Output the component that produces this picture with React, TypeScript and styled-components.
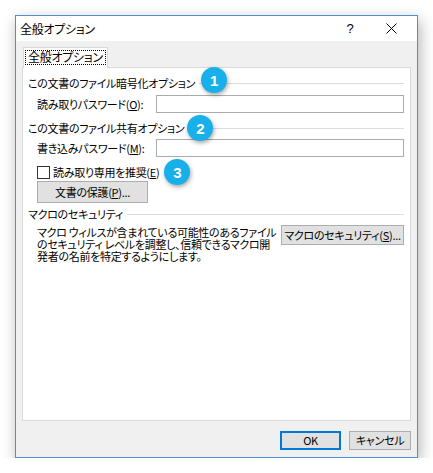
import styled, {createGlobalStyle} from 'styled-components';

const GlobalStyle = createGlobalStyle`
	html, body {
		margin: 0;
		background: #fff;
	}
	body {
		font-family: 'Noto Sans CJK JP', 'Noto Sans', sans-serif;
		font-size: 11px;
		letter-spacing: -0.3px;
		color: #000;
		font-feature-settings: 'palt' 1;
	}
`;

const Page = styled.div`
	padding: 15px 0 0 15px;
`;

const Window = styled.div`
	box-sizing: border-box;
	width: 403px;
	height: 443px;
	border: 1px solid #4a8fdb;
	background: #f0f0f0;
	display: flex;
	flex-direction: column;
	box-shadow: 2px 5px 14px rgba(0, 0, 0, 0.3);
`;

const TitleBar = styled.div`
	height: 25px;
	background: #fff;
	display: flex;
	align-items: center;
	padding-left: 4px;
	line-height: 1;
`;

const Title = styled.div`
	flex: 1;
	font-size: 12px;
`;

const TitleIcon = styled.div<{$width: number; $gap: number}>`
	width: ${(p) => p.$width}px;
	margin-right: ${(p) => p.$gap}px;
	display: flex;
	align-items: center;
	justify-content: center;
	font-family: 'Liberation Sans', Arial, sans-serif;
	font-size: 13px;
`;

const Body = styled.div`
	flex: 1;
	display: flex;
	flex-direction: column;
	padding: 6px 6px 7px 6px;
`;

const TabStrip = styled.div`
	display: flex;
`;

const Tab = styled.div`
	position: relative;
	z-index: 1;
	box-sizing: border-box;
	height: 21px;
	margin: 0 0 -1px 1px;
	padding: 3px 2px 0 2px;
	border: 1px solid #d9d9d9;
	border-bottom: 0;
	background: #fff;
	line-height: 1;
`;

const TabLabel = styled.span`
	display: inline-block;
	padding: 0 2px 1px;
	outline: 1px dotted #000;
	font-size: 12px;
`;

const Panel = styled.div`
	flex: 1;
	display: flex;
	flex-direction: column;
	border: 1px solid #d9d9d9;
	background: #fff;
	padding: 6px 6px 0 5px;
	white-space: nowrap;
`;

const SectionHeader = styled.div<{$top?: number}>`
	display: flex;
	align-items: center;
	height: 18px;
	margin-top: ${(p) => p.$top ?? 0}px;
`;

const Rule = styled.div`
	flex: 1;
	height: 1px;
	margin-left: 4px;
	background: #dcdcdc;
`;

const Anchor = styled.span`
	position: relative;
`;

const Badge = styled.span<{$gap: number; $dy: number}>`
	position: absolute;
	z-index: 2;
	left: calc(100% + ${(p) => p.$gap}px);
	top: 50%;
	width: 26px;
	height: 26px;
	margin-top: ${(p) => p.$dy - 13}px;
	border-radius: 50%;
	background: #17b0ea;
	color: #fff;
	display: flex;
	align-items: center;
	justify-content: center;
	font-family: 'Liberation Sans', Arial, sans-serif;
	font-weight: bold;
	font-size: 15px;
	letter-spacing: 0;
	box-shadow: 1px 2px 4px rgba(0, 0, 0, 0.35);
`;

const FieldRow = styled.div<{$top: number}>`
	display: flex;
	align-items: center;
	height: 18px;
	margin-top: ${(p) => p.$top}px;
	padding-left: 9px;
`;

const FieldLabel = styled.span`
	flex-shrink: 0;
`;

const TextBox = styled.input`
	box-sizing: border-box;
	flex-shrink: 0;
	width: 248px;
	height: 18px;
	margin: 0 0 0 auto;
	border: 1px solid #ababab;
	background: #fff;
	outline: none;
`;

const CheckRow = styled.label`
	display: flex;
	align-items: center;
	gap: 3px;
	height: 16px;
	margin-top: 7px;
	padding-left: 9px;
`;

const CheckBox = styled.span`
	box-sizing: border-box;
	width: 13px;
	height: 13px;
	border: 1px solid #333;
	background: #fff;
`;

const Button = styled.button<{$width: number; $height: number; $default?: boolean}>`
	box-sizing: border-box;
	flex-shrink: 0;
	width: ${(p) => p.$width}px;
	height: ${(p) => p.$height}px;
	padding: 0;
	border: ${(p) => (p.$default ? '2px solid #0078d7' : '1px solid #adadad')};
	background: #e1e1e1;
	font: inherit;
	letter-spacing: inherit;
	color: #000;
	line-height: 1;
	white-space: nowrap;
	display: flex;
	align-items: center;
	justify-content: center;
`;

const ProtectButton = styled(Button)`
	margin: 1px 0 0 9px;
`;

const MacroBody = styled.div`
	display: flex;
	align-items: flex-start;
	margin-top: 2px;
	padding-left: 9px;
`;

const MacroText = styled.div`
	padding-top: 1px;
	line-height: 12px;
`;

const MacroButton = styled(Button)`
	margin-left: auto;
`;

const Footer = styled.div`
	display: flex;
	justify-content: flex-end;
	gap: 8px;
	margin-top: 10px;
`;

function CloseIcon() {
	return (
		<svg width="11" height="11" viewBox="0 0 11 11">
			<path d="M0.5 0.5 L10.5 10.5 M10.5 0.5 L0.5 10.5" stroke="#000" strokeWidth="1" />
		</svg>
	);
}

export default function App() {
	return (
		<>
			<GlobalStyle />
			<Page>
				<Window>
					<TitleBar>
						<Title>全般オプション</Title>
						<TitleIcon $width={26} $gap={14}>?</TitleIcon>
						<TitleIcon $width={28} $gap={12}>
							<CloseIcon />
						</TitleIcon>
					</TitleBar>
					<Body>
						<TabStrip>
							<Tab>
								<TabLabel>全般オプション</TabLabel>
							</Tab>
						</TabStrip>
						<Panel>
							<SectionHeader>
								<Anchor>
									この文書のファイル暗号化オプション
									<Badge $gap={6} $dy={-3}>1</Badge>
								</Anchor>
								<Rule />
							</SectionHeader>
							<FieldRow $top={3}>
								<FieldLabel>
									読み取りパスワード(<u>O</u>):
								</FieldLabel>
								<TextBox type="password" />
							</FieldRow>
							<SectionHeader $top={6}>
								<Anchor>
									この文書のファイル共有オプション
									<Badge $gap={3} $dy={0}>2</Badge>
								</Anchor>
								<Rule />
							</SectionHeader>
							<FieldRow $top={2}>
								<FieldLabel>
									書き込みパスワード(<u>M</u>):
								</FieldLabel>
								<TextBox type="password" />
							</FieldRow>
							<CheckRow>
								<CheckBox />
								<Anchor>
									読み取り専用を推奨(<u>E</u>)
									<Badge $gap={5} $dy={0}>3</Badge>
								</Anchor>
							</CheckRow>
							<ProtectButton $width={111} $height={22}>
								文書の保護(<u>P</u>)...
							</ProtectButton>
							<SectionHeader $top={2}>
								<span>マクロのセキュリティ</span>
								<Rule />
							</SectionHeader>
							<MacroBody>
								<MacroText>
									マクロ ウィルスが含まれている可能性のあるファイル
									<br />
									のセキュリティ レベルを調整し、信頼できるマクロ開
									<br />
									発者の名前を特定するようにします。
								</MacroText>
								<MacroButton $width={123} $height={20}>
									マクロのセキュリティ(<u>S</u>)...
								</MacroButton>
							</MacroBody>
						</Panel>
						<Footer>
							<Button $width={61} $height={19} $default>
								OK
							</Button>
							<Button $width={62} $height={19}>
								キャンセル
							</Button>
						</Footer>
					</Body>
				</Window>
			</Page>
		</>
	);
}
